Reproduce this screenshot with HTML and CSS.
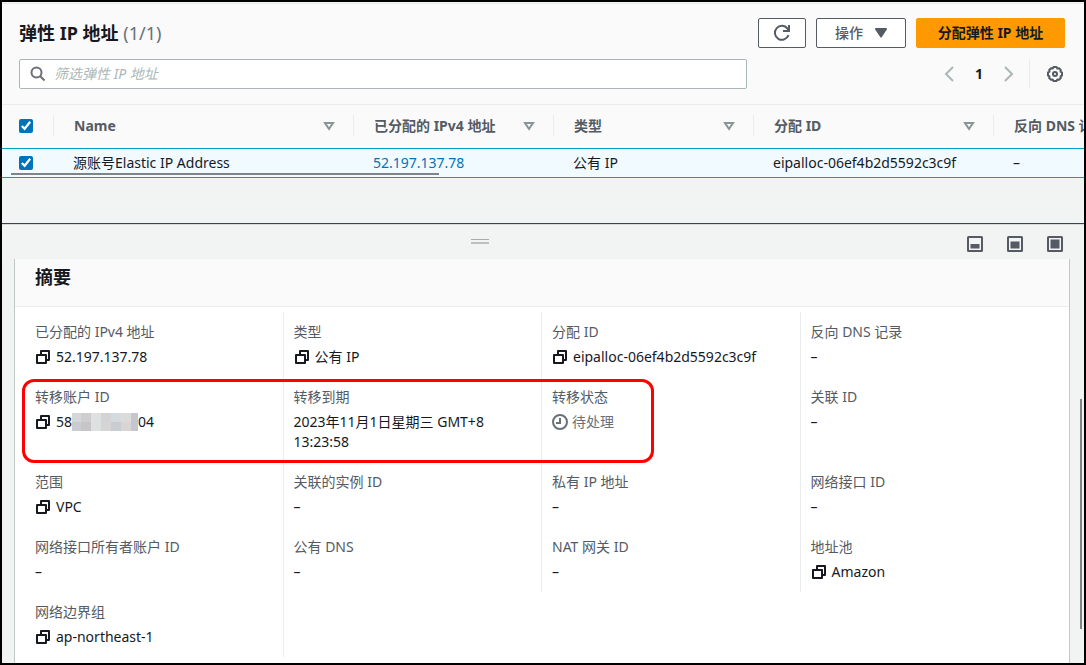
FILE: index.html
```html
<!DOCTYPE html>
<html lang="zh-CN">
<head>
<meta charset="utf-8">
<title>弹性 IP 地址</title>
<link rel="stylesheet" href="styles.css">
</head>
<body>
<svg class="sprite" aria-hidden="true">
  <symbol id="copy" viewBox="0 0 16 16"><path d="M2 6h9v8H2zM6 5.500V2h8v9h-2.500" fill="none" stroke="currentColor" stroke-width="2" stroke-linejoin="round"/></symbol>
  <symbol id="sort" viewBox="0 0 12 10"><path d="M2 2h8L6 8z" fill="none" stroke="currentColor" stroke-width="2"/></symbol>
</svg>
<main class="console">
  <section class="list">
    <header class="list-header">
      <div class="bar">
        <h1 class="title">弹性 IP 地址 <span class="count">(1/1)</span></h1>
        <div class="actions">
          <button class="btn btn-icon" type="button" aria-label="刷新"><svg width="18" height="18" viewBox="0 0 18 18"><path d="M15.500 11.200A7 7 0 1 1 14.500 4.600L16 6.500M16 1v6h-6" fill="none" stroke="currentColor" stroke-width="2"/></svg></button>
          <button class="btn btn-menu" type="button">操作 <svg width="12" height="10" viewBox="0 0 12 10"><path d="M1 0h10a1 1 0 0 1 .8 1.500L6.500 9.500h-1L.2 1.500A1 1 0 0 1 1 0z" fill="currentColor"/></svg></button>
          <button class="btn btn-primary" type="button">分配弹性 IP 地址</button>
        </div>
      </div>
      <div class="bar">
        <label class="search"><svg width="16" height="16" viewBox="0 0 16 16"><circle cx="6.500" cy="6.500" r="5" fill="none" stroke="currentColor" stroke-width="2"/><path d="M10 10l4.500 4.500" stroke="currentColor" stroke-width="2"/></svg><input class="search-input" type="text" placeholder="筛选弹性 IP 地址" aria-label="筛选弹性 IP 地址"></label>
        <nav class="pager" aria-label="分页">
          <button class="plain arrow" type="button" aria-label="上一页"><svg width="10" height="16" viewBox="0 0 10 16"><path d="M9 1L2 8l7 7" fill="none" stroke="currentColor" stroke-width="2"/></svg></button>
          <button class="plain page" type="button">1</button>
          <button class="plain arrow" type="button" aria-label="下一页"><svg width="10" height="16" viewBox="0 0 10 16"><path d="M1 1l7 7-7 7" fill="none" stroke="currentColor" stroke-width="2"/></svg></button>
          <span class="settings"><button class="plain" type="button" aria-label="首选项"><svg width="16" height="16" viewBox="0 0 16 16" fill="none" stroke="currentColor"><path d="M6.500 1h3l.8 1.500 1.700-.3L13.800 4l-.3 1.700L15 6.500v3l-1.500.8.3 1.700-1.800 1.800-1.700-.3L9.500 15h-3l-.8-1.500-1.700.3L2.200 12l.3-1.700L1 9.500v-3l1.500-.8L2.200 4 4 2.200l1.700.3z" stroke-width="2" stroke-linejoin="round"/><circle cx="8" cy="8" r="2" stroke-width="2"/></svg></button></span>
        </nav>
      </div>
    </header>
    <div class="table-wrap">
      <table class="table">
        <colgroup><col class="c-check"><col class="c-name"><col class="c-ip"><col class="c-ip"><col class="c-id"><col class="c-dns"></colgroup>
        <thead><tr>
          <th><div class="th"><input class="check" type="checkbox" checked aria-label="全选"></div></th>
          <th><div class="th">Name<svg class="sort" width="12" height="10"><use href="#sort"/></svg></div></th>
          <th><div class="th">已分配的 IPv4 地址<svg class="sort" width="12" height="10"><use href="#sort"/></svg></div></th>
          <th><div class="th">类型<svg class="sort" width="12" height="10"><use href="#sort"/></svg></div></th>
          <th><div class="th">分配 ID<svg class="sort" width="12" height="10"><use href="#sort"/></svg></div></th>
          <th><div class="th">反向 DNS 记录</div></th>
        </tr></thead>
        <tbody><tr>
          <td><input class="check" type="checkbox" checked aria-label="选择 源账号Elastic IP Address"></td>
          <td>源账号Elastic IP Address</td>
          <td><a class="link" href="#">52.197.137.78</a></td>
          <td>公有 IP</td>
          <td>eipalloc-06ef4b2d5592c3c9f</td>
          <td>–</td>
        </tr></tbody>
      </table>
      <div class="scroll-x"></div>
    </div>
  </section>

  <section class="panel">
    <div class="panel-bar">
      <div class="grip-area"><span class="grip"></span></div>
      <div class="panel-buttons">
        <button class="plain" type="button" aria-label="小面板"><svg width="16" height="16" viewBox="0 0 16 16"><rect x="1" y="1" width="14" height="14" rx=".5" fill="none" stroke="currentColor" stroke-width="2"/><path d="M3.500 8h9v4.500h-9z" fill="currentColor"/></svg></button>
        <button class="plain" type="button" aria-label="中面板"><svg width="16" height="16" viewBox="0 0 16 16"><rect x="1" y="1" width="14" height="14" rx=".5" fill="none" stroke="currentColor" stroke-width="2"/><path d="M3.500 5.500h9v7h-9z" fill="currentColor"/></svg></button>
        <button class="plain" type="button" aria-label="全屏面板"><svg width="16" height="16" viewBox="0 0 16 16"><rect x="1" y="1" width="14" height="14" rx=".5" fill="none" stroke="currentColor" stroke-width="2"/><path d="M3.500 3.500h9v9h-9z" fill="currentColor"/></svg></button>
      </div>
    </div>
    <article class="summary">
      <h2 class="summary-title">摘要</h2>
      <dl class="grid">
        <div class="cell"><dt>已分配的 IPv4 地址</dt><dd><svg class="copy"><use href="#copy"/></svg>52.197.137.78</dd></div>
        <div class="cell"><dt>类型</dt><dd><svg class="copy"><use href="#copy"/></svg>公有 IP</dd></div>
        <div class="cell"><dt>分配 ID</dt><dd><svg class="copy"><use href="#copy"/></svg>eipalloc-06ef4b2d5592c3c9f</dd></div>
        <div class="cell"><dt>反向 DNS 记录</dt><dd>–</dd></div>
        <div class="cell"><dt>转移账户 ID</dt><dd><svg class="copy"><use href="#copy"/></svg>58<svg class="mask" viewBox="0 0 66 18" shape-rendering="crispEdges"><path fill="#d4d8da" d="M0 0h9v9H0z"/><path fill="#d0cdce" d="M9 0h10v9H9z"/><path fill="#dfe0e0" d="M19 0h10v9H19z"/><path fill="#d3d2d5" d="M29 0h10v9H29z"/><path fill="#d5dade" d="M39 0h10v9H39z"/><path fill="#dbdcda" d="M49 0h10v9H49z"/><path fill="#c4c7d0" d="M59 0h7v18h-7z"/><path fill="#c9ccd0" d="M0 9h9v9H0z"/><path fill="#c8c5c9" d="M9 9h10v9H9z"/><path fill="#dde1e1" d="M19 9h10v9H19z"/><path fill="#d6d5d5" d="M29 9h10v9H29z"/><path fill="#c9ccd3" d="M39 9h10v9H39z"/><path fill="#d8d5d4" d="M49 9h10v9H49z"/></svg>04</dd></div>
        <div class="cell"><dt>转移到期</dt><dd>2023年11月1日星期三 GMT+8<br>13:23:58</dd></div>
        <div class="cell"><dt>转移状态</dt><dd class="pending"><svg class="clock" viewBox="0 0 16 16"><circle cx="8" cy="8" r="7" fill="none" stroke="currentColor" stroke-width="2"/><path d="M8 4v5H4" fill="none" stroke="currentColor" stroke-width="2"/></svg>待处理</dd></div>
        <div class="cell"><dt>关联 ID</dt><dd>–</dd></div>
        <div class="cell"><dt>范围</dt><dd><svg class="copy"><use href="#copy"/></svg>VPC</dd></div>
        <div class="cell"><dt>关联的实例 ID</dt><dd>–</dd></div>
        <div class="cell"><dt>私有 IP 地址</dt><dd>–</dd></div>
        <div class="cell"><dt>网络接口 ID</dt><dd>–</dd></div>
        <div class="cell"><dt>网络接口所有者账户 ID</dt><dd>–</dd></div>
        <div class="cell"><dt>公有 DNS</dt><dd>–</dd></div>
        <div class="cell"><dt>NAT 网关 ID</dt><dd>–</dd></div>
        <div class="cell"><dt>地址池</dt><dd><svg class="copy"><use href="#copy"/></svg>Amazon</dd></div>
        <div class="cell"><dt>网络边界组</dt><dd><svg class="copy"><use href="#copy"/></svg>ap-northeast-1</dd></div>
        <div class="cell"></div>
        <div class="highlight"></div>
      </dl>
    </article>
    <div class="scroll-y"></div>
  </section>
</main>
</body>
</html>
```
FILE: styles.css
```css
* { box-sizing: border-box; }
body { margin: 0; font: 14px/20px "Noto Sans", "Noto Sans CJK SC", sans-serif; color: #16191f; }
svg { display: block; flex: none; }
button, input { font: inherit; }
.sprite { position: absolute; width: 0; height: 0; }
.console { display: flex; flex-direction: column; min-height: 100vh; border: 2px solid #000; background: #f2f3f3; overflow: hidden; }
.list { padding-bottom: 45px; border-bottom: 1px solid #37474a; }
.list-header { display: flex; flex-direction: column; gap: 11px; padding: 14px 19px 15px 17px; background: #fafafa; border-top: 1px solid #eaeded; border-bottom: 1px solid #eaeded; margin-top: 1px; }
.bar { display: flex; align-items: center; justify-content: space-between; height: 30px; }
.title { margin: 0; font-size: 18px; line-height: 22px; font-weight: 700; }
.count { font-weight: 400; color: #687078; }
.actions { display: flex; gap: 10px; }
.btn { display: flex; align-items: center; justify-content: center; gap: 12px; height: 30px; padding: 0; border: 1px solid #545b64; border-radius: 2px; background: #fff; color: #545b64; font-weight: 700; white-space: nowrap; }
.btn-icon { width: 48px; }
.btn-menu { width: 90px; font-weight: 500; }
.btn-primary { width: 149px; border-color: #f90; background: #f90; color: #16191f; }
.search { display: flex; align-items: center; gap: 8px; width: 728px; height: 30px; padding: 0 10px; border: 1px solid #aab7b8; border-radius: 2px; background: #fff; color: #687078; }
.search-input { flex: 1; min-width: 0; padding: 0; border: 0; outline: 0; background: none; color: #16191f; }
.search-input::placeholder { color: #aab7b8; font-style: italic; opacity: 1; }
.plain { padding: 0; border: 0; background: none; color: #545b64; }
.pager { display: flex; align-items: center; height: 30px; }
.arrow { color: #aab7b8; }
.page { width: 50px; font-weight: 700; color: #16191f; }
.settings { display: flex; align-items: center; height: 30px; margin-left: 15px; padding: 0 2px 0 17px; border-left: 1px solid #eaeded; }
.table-wrap { position: relative; overflow: hidden; }
.table { width: 1232px; min-width: 100%; table-layout: fixed; border-spacing: 0; text-align: left; white-space: nowrap; }
.c-check { width: 52px; }
.c-name { width: 300px; }
.c-ip { width: 200px; }
.c-id { width: 240px; }
.table th { padding: 10px 0 12px; background: #fafafa; color: #545b64; font-weight: 700; }
.th { display: flex; align-items: center; justify-content: space-between; height: 21px; padding: 0 18px 0 20px; border-right: 1px solid #eaeded; }
.sort { color: #879596; }
.table td { height: 30px; padding: 0 19px; border: 1px solid #00a1c9; border-width: 1px 0; background: #f1faff; }
.table th:first-child .th, .table td:first-child { padding: 0 0 0 17px; }
.check { display: block; width: 14px; height: 14px; margin: 0; accent-color: #0073bb; }
.link { color: #0073bb; text-decoration: none; }
.scroll-x { position: absolute; left: 9px; bottom: 3px; width: 428px; height: 2px; background: #7f8487; }
.panel { position: relative; flex: 1; display: flex; flex-direction: column; border-top: 1px solid #d5dbdb; }
.panel-bar { display: flex; height: 34px; padding-right: 21px; }
.grip-area { flex: 1; display: flex; justify-content: center; padding-top: 14px; }
.grip { width: 18px; height: 5px; border: 1px solid #aaa; border-width: 1px 0 2px; border-bottom-color: #bbc0c0; }
.panel-buttons { display: flex; align-items: flex-start; gap: 24px; padding: 11px 0 0 9px; }
.summary { flex: 1; margin: 0 14px 0 12px; border: 1px solid #c2c7c8; border-width: 0 1px; background: #fff; }
.summary-title { margin: 0; padding: 7px 20px 18px; background: #fafafa; border-bottom: 1px solid #eaeded; font-size: 18px; line-height: 22px; }
.grid { position: relative; display: grid; grid-template-columns: repeat(4, 1fr); margin: 0; padding: 5px 10px; }
.cell { display: flex; flex-direction: column; gap: 5px; padding: 10px; border-right: 1px solid #eaeded; }
.cell:nth-child(4n), .cell:empty { border-right: 0; }
.cell dt { color: #545b64; }
.cell dd { display: flex; align-items: center; margin: 0; }
.cell dd.pending { color: #687078; }
.copy { width: 16px; height: 16px; margin-right: 5px; }
.clock { width: 16px; height: 16px; margin-right: 4px; }
.mask { width: 66px; height: 18px; }
.highlight { position: absolute; grid-column: 1 / 4; grid-row: 2 / 3; inset: 2px 147px -1px -3px; border: 3px solid #f00; border-radius: 12px; }
.scroll-y { position: absolute; right: 2px; top: 174px; width: 2px; height: 230px; background: #7f8487; }
```
